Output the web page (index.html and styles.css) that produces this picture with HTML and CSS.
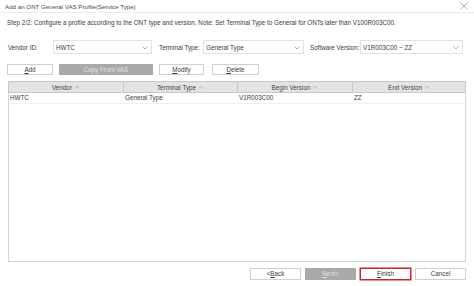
FILE: index.html
```html
<!DOCTYPE html>
<html lang="en">
<head>
    <meta charset="UTF-8">
    <title>Add an ONT General VAS Profile(Service Type)</title>
    <link rel="stylesheet" href="styles.css">
</head>
<body>
    <div class="dialog">
        <!-- Title bar -->
        <div class="titlebar">
            <span class="title">Add an ONT General VAS Profile(Service Type)</span>
            <svg class="close" width="8" height="8" viewBox="0 0 8 8"><path d="M0.5 0.5L7.5 7.5M7.5 0.5L0.5 7.5" stroke="#9a9a9a" stroke-width="0.8"/></svg>
        </div>

        <div class="step">Step 2/2: Configure a profile according to the ONT type and version. Note: Set Terminal Type to General for ONTs later than V100R003C00.</div>

        <!-- Filters -->
        <div class="filters">
            <span class="label vendor-label">Vendor ID:</span>
            <div class="combo vendor-combo"><span>HWTC</span><svg class="chev" width="6" height="4" viewBox="0 0 6 4"><path d="M0.5 0.5L3 3L5.5 0.5" fill="none" stroke="#a0a0a0" stroke-width="0.8"/></svg></div>
            <span class="label type-label">Terminal Type:</span>
            <div class="combo type-combo"><span>General Type</span><svg class="chev" width="6" height="4" viewBox="0 0 6 4"><path d="M0.5 0.5L3 3L5.5 0.5" fill="none" stroke="#a0a0a0" stroke-width="0.8"/></svg></div>
            <span class="label sw-label">Software Version:</span>
            <div class="combo sw-combo"><span>V1R003C00 ~ ZZ</span><svg class="chev" width="6" height="4" viewBox="0 0 6 4"><path d="M0.5 0.5L3 3L5.5 0.5" fill="none" stroke="#a0a0a0" stroke-width="0.8"/></svg></div>
        </div>

        <!-- Toolbar -->
        <div class="toolbar">
            <button class="btn btn-add"><u>A</u>dd</button>
            <button class="btn btn-copy" disabled>Copy From VAS</button>
            <button class="btn btn-modify"><u>M</u>odify</button>
            <button class="btn btn-delete"><u>D</u>elete</button>
        </div>

        <!-- Table -->
        <div class="table">
            <div class="thead">
                <div class="th">Vendor<svg class="sort" width="6" height="4" viewBox="0 0 6 4"><path d="M0.5 3.5L3 1L5.5 3.5" fill="none" stroke="#b0b0b0" stroke-width="0.8"/></svg></div>
                <div class="th">Terminal Type<svg class="sort" width="6" height="4" viewBox="0 0 6 4"><path d="M0.5 3.5L3 1L5.5 3.5" fill="none" stroke="#b0b0b0" stroke-width="0.8"/></svg></div>
                <div class="th">Begin Version<svg class="sort" width="6" height="4" viewBox="0 0 6 4"><path d="M0.5 3.5L3 1L5.5 3.5" fill="none" stroke="#b0b0b0" stroke-width="0.8"/></svg></div>
                <div class="th last">End Version<svg class="sort" width="6" height="4" viewBox="0 0 6 4"><path d="M0.5 3.5L3 1L5.5 3.5" fill="none" stroke="#b0b0b0" stroke-width="0.8"/></svg></div>
            </div>
            <div class="row">
                <div class="td">HWTC</div>
                <div class="td">General Type</div>
                <div class="td">V1R003C00</div>
                <div class="td">ZZ</div>
            </div>
        </div>

        <!-- Footer -->
        <div class="footer">
            <button class="btn fbtn">&lt;<u>B</u>ack</button>
            <button class="btn fbtn" disabled><u>N</u>ext&gt;</button>
            <button class="btn fbtn finish"><u>F</u>inish</button>
            <button class="btn fbtn">Cancel</button>
        </div>
    </div>
</body>
</html>
```
FILE: styles.css
```css
body { margin: 0; background: #fff; font-family: "Liberation Sans", Arial, sans-serif; font-size: 6.3px; color: #3a3a3a; }
.dialog { width: 474px; height: 286px; display: flex; flex-direction: column; }

.titlebar { height: 12px; border-bottom: 1px solid #ececec; display: flex; align-items: center; justify-content: space-between; padding: 0 5px 0 5px; }
.title { font-size: 6.2px; color: #4a4a4a; }
.close { margin-right: 1px; }

.step { padding: 5px 0 0 7px; height: 10px; line-height: 10px; }

.filters { display: flex; align-items: center; height: 14px; margin-top: 12px; padding-left: 8px; }
.label { white-space: nowrap; flex-shrink: 0; }
.vendor-label { width: 45px; }
.type-label { width: 44px; margin-left: 7px; }
.sw-label { width: 50px; margin-left: 6px; }
.combo { flex-shrink: 0; height: 14px; border: 1px solid #e2e2e2; display: flex; align-items: center; justify-content: space-between; padding: 0 3px 0 2px; box-sizing: border-box; }
.vendor-combo { width: 99px; }
.type-combo { width: 101px; }
.sw-combo { width: 103px; }
.chev { margin-top: 1px; }

.toolbar { display: flex; height: 11px; margin-top: 10px; padding-left: 7px; gap: 6px; }
.btn { font-family: inherit; font-size: 6.3px; color: #3a3a3a; background: #fff; border: 1px solid #cfcfcf; padding: 0; height: 11px; line-height: 9px; text-align: center; }
.btn[disabled] { background: #a9a9a9; border-color: #a9a9a9; color: #e2e2e2; }
.btn-add { width: 46px; }
.btn-copy { width: 94px; }
.btn-modify { width: 45px; }
.btn-delete { width: 47px; margin-left: 2px; }

.table { margin: 6px 0 0 8px; width: 458px; height: 181px; border: 1px solid #d4d4d4; border-top: none; box-sizing: border-box; }
.thead { display: grid; grid-template-columns: 115px 114px 115px 1fr; height: 12px; box-sizing: border-box; background: #e4e4e4; border: 1px solid #c8c8c8; margin: 0 -1px; }
.th { display: flex; align-items: center; justify-content: center; gap: 2px; border-right: 1px solid #c8c8c8; color: #444; }
.th.last { border-right: none; }
.sort { margin-top: -1px; }
.row { display: grid; grid-template-columns: 115px 114px 115px 1fr; height: 10px; border-bottom: 1px solid #f0f0f0; }
.td { padding-left: 1px; line-height: 10px; }

.footer { display: flex; justify-content: flex-end; gap: 4px; padding-right: 8px; margin-top: 6px; }
.fbtn { width: 51px; height: 12px; line-height: 10px; }
.finish { border: 1px solid #d0202a; box-shadow: 0 0 0 0.5px #d0202a; }
```
